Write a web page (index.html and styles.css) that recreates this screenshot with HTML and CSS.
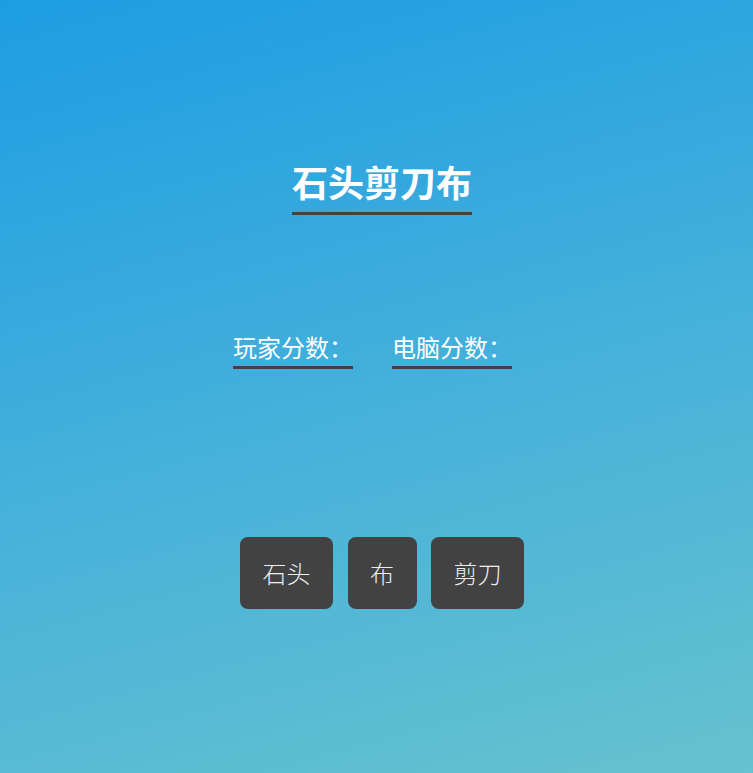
FILE: index.html
```html
<!DOCTYPE html>
<html lang="zh-CN">
<head>
    <meta charset="UTF-8">
    <meta name="viewport" content="width=device-width, initial-scale=1.0">
    <title>石头剪刀布</title>
    <link rel="stylesheet" href="styles.css">
</head>
<body>
    <div class="game">
        <h1 class="title">石头剪刀布</h1>

        <div class="scores">
            <span class="score">玩家分数：<span id="player-score"></span></span>
            <span class="score">电脑分数：<span id="computer-score"></span></span>
        </div>

        <div class="choices">
            <button class="choice" data-choice="rock">石头</button>
            <button class="choice" data-choice="paper">布</button>
            <button class="choice" data-choice="scissors">剪刀</button>
        </div>
    </div>
</body>
</html>
```

FILE: styles.css
```css
html, body {
    margin: 0;
    padding: 0;
    min-height: 100%;
}
body {
    font-family: 'Noto Sans CJK SC', 'Noto Sans', sans-serif;
    min-height: 100vh;
    background: linear-gradient(165deg, #1d9de3 0%, #48b2da 55%, #66c2ce 100%);
    color: white;
}
.game {
    display: flex;
    flex-direction: column;
    align-items: center;
    padding: 161px 0 0 11px;
}
.title {
    margin: 0;
    font-size: 36px;
    font-weight: bold;
    line-height: 40px;
    padding-bottom: 11px;
    border-bottom: 3px solid #424242;
}
.scores {
    display: flex;
    gap: 39px;
    margin: 118px 19px 0 0;
}
.score {
    font-size: 24px;
    line-height: 28px;
    padding-bottom: 5px;
    border-bottom: 3px solid #424242;
}
.choices {
    display: flex;
    gap: 14.5px;
    margin-top: 168px;
}
.choice {
    font-family: 'Noto Sans CJK SC', 'Noto Sans', sans-serif;
    font-size: 24px;
    font-weight: 300;
    line-height: 36px;
    padding: 18px 22.5px;
    border: none;
    border-radius: 8px;
    background-color: #424242;
    color: #eeeeee;
    cursor: pointer;
}
.choice:hover {
    background-color: #333;
}
```
